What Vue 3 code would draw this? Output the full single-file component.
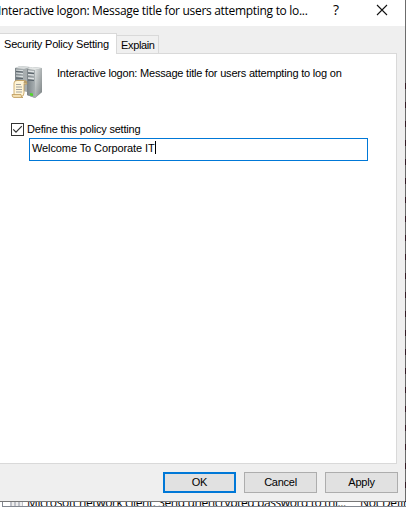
<script setup>
import { ref } from 'vue'

const enabled = ref(true)
const message = ref('Welcome To Corporate IT')
</script>

<template>
  <div class="screen">
    <div class="dialog">
      <header class="titlebar">
        <span class="title">Interactive logon: Message title for users attempting to lo...</span>
        <span class="help">?</span>
        <svg class="close" width="12" height="12" viewBox="0 0 12 12">
          <path d="M1 1L11 11M11 1L1 11" fill="none" stroke="#111" stroke-width="1.1" />
        </svg>
      </header>

      <nav class="tabs">
        <div class="tab active"><span class="t-security">Security Policy Setting</span></div>
        <div class="tab"><span class="t-explain">Explain</span></div>
      </nav>

      <main class="panel">
        <div class="heading">
          <svg class="server" width="34" height="36" viewBox="0 0 34 36">
            <defs>
              <linearGradient id="front" x1="0" y1="0" x2="1" y2="0">
                <stop offset="0" stop-color="#7b8387" /><stop offset="1" stop-color="#a9b0b2" />
              </linearGradient>
              <linearGradient id="side" x1="0" y1="0" x2="1" y2="1">
                <stop offset="0" stop-color="#dfe3e3" /><stop offset="1" stop-color="#777e80" />
              </linearGradient>
            </defs>
            <path d="M5 3L10 1L20 2L17 5V27L5 24Z" fill="#a7adaf" />
            <path d="M5 3L14 4V27L5 24Z" fill="url(#front)" />
            <path d="M5 3L10 1L20 2L14 4Z" fill="#d8dcdc" />
            <path d="M6 5L13 5.6M6 8L13 8.6M6 11L13 11.6" stroke="#d9dedf" stroke-width="1.2" />
            <path d="M6 6.5L13 7.1M6 13L13 13.6" stroke="#59636a" />
            <path d="M17 4L22 2L32 3V27L25 33L17 30Z" fill="#8f9799" />
            <path d="M17 4L25 5V33L17 30Z" fill="url(#front)" />
            <path d="M25 5L32 3V27L25 33Z" fill="url(#side)" />
            <path d="M17 4L22 2L32 3L25 5Z" fill="#e3e6e5" />
            <path d="M18 6L24 6.6M18 9.5L24 10.1M18 13L24 13.6" stroke="#e0e4e5" stroke-width="1.3" />
            <path d="M18 8L24 8.6M18 15L24 15.6" stroke="#59636a" />
            <path d="M20 28L23 28.5V31L20 30.5Z" fill="#50d729" />
            <path d="M4 18Q4 15.5 7 15.5H14Q17 15.5 17 19H14V28Q14 31.5 11 31.5H4Z" fill="#fff5d8" stroke="#c39c55" stroke-width=".8" />
            <path d="M13.5 18.5Q13.5 15.5 15.5 15.5Q17 15.5 17 18.5Z" fill="#b89d6a" />
            <path d="M2 29.5H11Q11 32.5 13 32.5H4Q2 32.5 2 29.5Z" fill="#f3deb0" stroke="#bd9959" stroke-width=".8" />
            <path d="M6 19.5H11M6 22H12M6 24.5H12M6 27H12" stroke="#999a9a" stroke-width=".9" />
          </svg>
          <span class="name">Interactive logon: Message title for users attempting to log on</span>
        </div>

        <div class="define">
          <span class="checkbox" @click="enabled = !enabled">
            <svg v-if="enabled" width="11" height="11" viewBox="0 0 11 11">
              <path d="M1.2 5.3L4 8.2L9.8 2.2" fill="none" stroke="#333" stroke-width="1.2" />
            </svg>
          </span>
          <span class="t-define">Define this policy setting</span>
        </div>
        <div class="field"><span class="t-field">{{ message }}</span><i class="caret"></i></div>
      </main>

      <footer class="actions">
        <button class="btn primary"><span class="t-ok">OK</span></button>
        <button class="btn"><span class="t-cancel">Cancel</span></button>
        <button class="btn"><span class="t-apply">Apply</span></button>
      </footer>
    </div>
    <div class="edge"></div>
    <div class="behind">
      <i class="row-icon"></i>
      <span class="row-name">Microsoft network client: Send unencrypted password to thi...</span>
      <span class="row-value">Not Defined</span>
    </div>
  </div>
</template>

<style>
body { margin: 0; overflow: hidden; }
</style>

<style scoped>
* { box-sizing: border-box; }
.screen {
  width: 406px; height: 507px; overflow: hidden;
  display: grid; grid-template-columns: 405px 1px; grid-template-rows: 502px 5px;
  background: #fff; color: #000;
  font: 11px/14px "Liberation Sans", Arial, sans-serif;
  letter-spacing: -0.2px;
}
span { white-space: pre; }
.dialog {
  display: flex; flex-direction: column; height: 502px;
  background: #efefef; border-bottom: 1px solid #777; overflow: hidden;
}
.titlebar { display: flex; height: 26px; flex: none; background: #fff; }
.title {
  width: 335px; flex: none; margin-left: -2px; padding-top: 1px;
  font: 12px/20px "Open Sans", "Noto Sans", sans-serif; letter-spacing: -0.3px;
}
.help { width: 43px; font: 500 14px/20px "Open Sans", sans-serif; }
.close { margin-top: 4px; }
.tabs { display: flex; align-items: flex-end; height: 28px; flex: none; }
.tab {
  height: 19px; width: 42px; padding: 2px 0 0 4px;
  border: 1px solid #d9d9d9; border-left: 0; background: #f0f0f0;
}
.tab.active {
  width: 117px; height: 21px; padding: 3px 0 0 4px; border-bottom: 0; background: #fff;
}
.tabs::after { content: ""; width: 238px; height: 1px; background: #d9d9d9; }
.t-explain { letter-spacing: -0.35px; }
.panel {
  width: 397px; height: 410px; flex: none; background: #fff;
  border-right: 1px solid #d9d9d9; border-bottom: 1px solid #d9d9d9;
}
.heading { display: flex; height: 69px; padding: 10px 0 0 10px; }
.server { flex: none; margin-top: 1px; }
.name { margin: 2px 0 0 13px; }
.define { display: flex; height: 15px; padding-left: 11px; }
.checkbox {
  width: 13px; height: 13px; flex: none; margin-right: 3px; display: flex; border: 1px solid #333;
}
.define .t-define { margin-top: -1px; }
.field {
  display: flex; width: 339px; height: 23px; margin-left: 29px; padding: 2px 2px;
  border: 1px solid #0078d7;
}
.t-field { letter-spacing: -0.1px; }
.caret { width: 1px; height: 13px; background: #000; }
.actions { display: flex; justify-content: flex-end; gap: 8px; padding: 8px 7px 0 0; }
.btn {
  width: 73px; height: 21px; padding: 0; color: #000; background: #e1e1e1;
  border: 1px solid #adadad; border-radius: 0; font: inherit; line-height: 19px;
  letter-spacing: -0.25px;
}
.btn.primary { border: 2px solid #0078d7; line-height: 17px; }
.edge {
  background:
    linear-gradient(#6c6c6c, #6c6c6c) 0 0 / 1px 83px no-repeat,
    repeating-linear-gradient(#321b25 0 6px, #6c6c6c 6px 19px) 0 83px / 1px 419px no-repeat;
}
.behind {
  grid-column: 1 / 3; display: flex; height: 5px; overflow: hidden; margin-left: 2px;
  border-left: 1px solid #828790; border-bottom: 1px solid #828790;
  font: 12px/20px "Open Sans", "Noto Sans", sans-serif;
}
.row-icon {
  flex: none; width: 13px; height: 4px; margin: 0 4px 0 7px;
  background: repeating-linear-gradient(90deg, #bfc1c8 0 2px, #eee 2px 4px);
}
.row-name, .row-value { margin-top: -9px; flex: none; letter-spacing: -0.4px; }
.row-name { width: 333px; }
</style>
